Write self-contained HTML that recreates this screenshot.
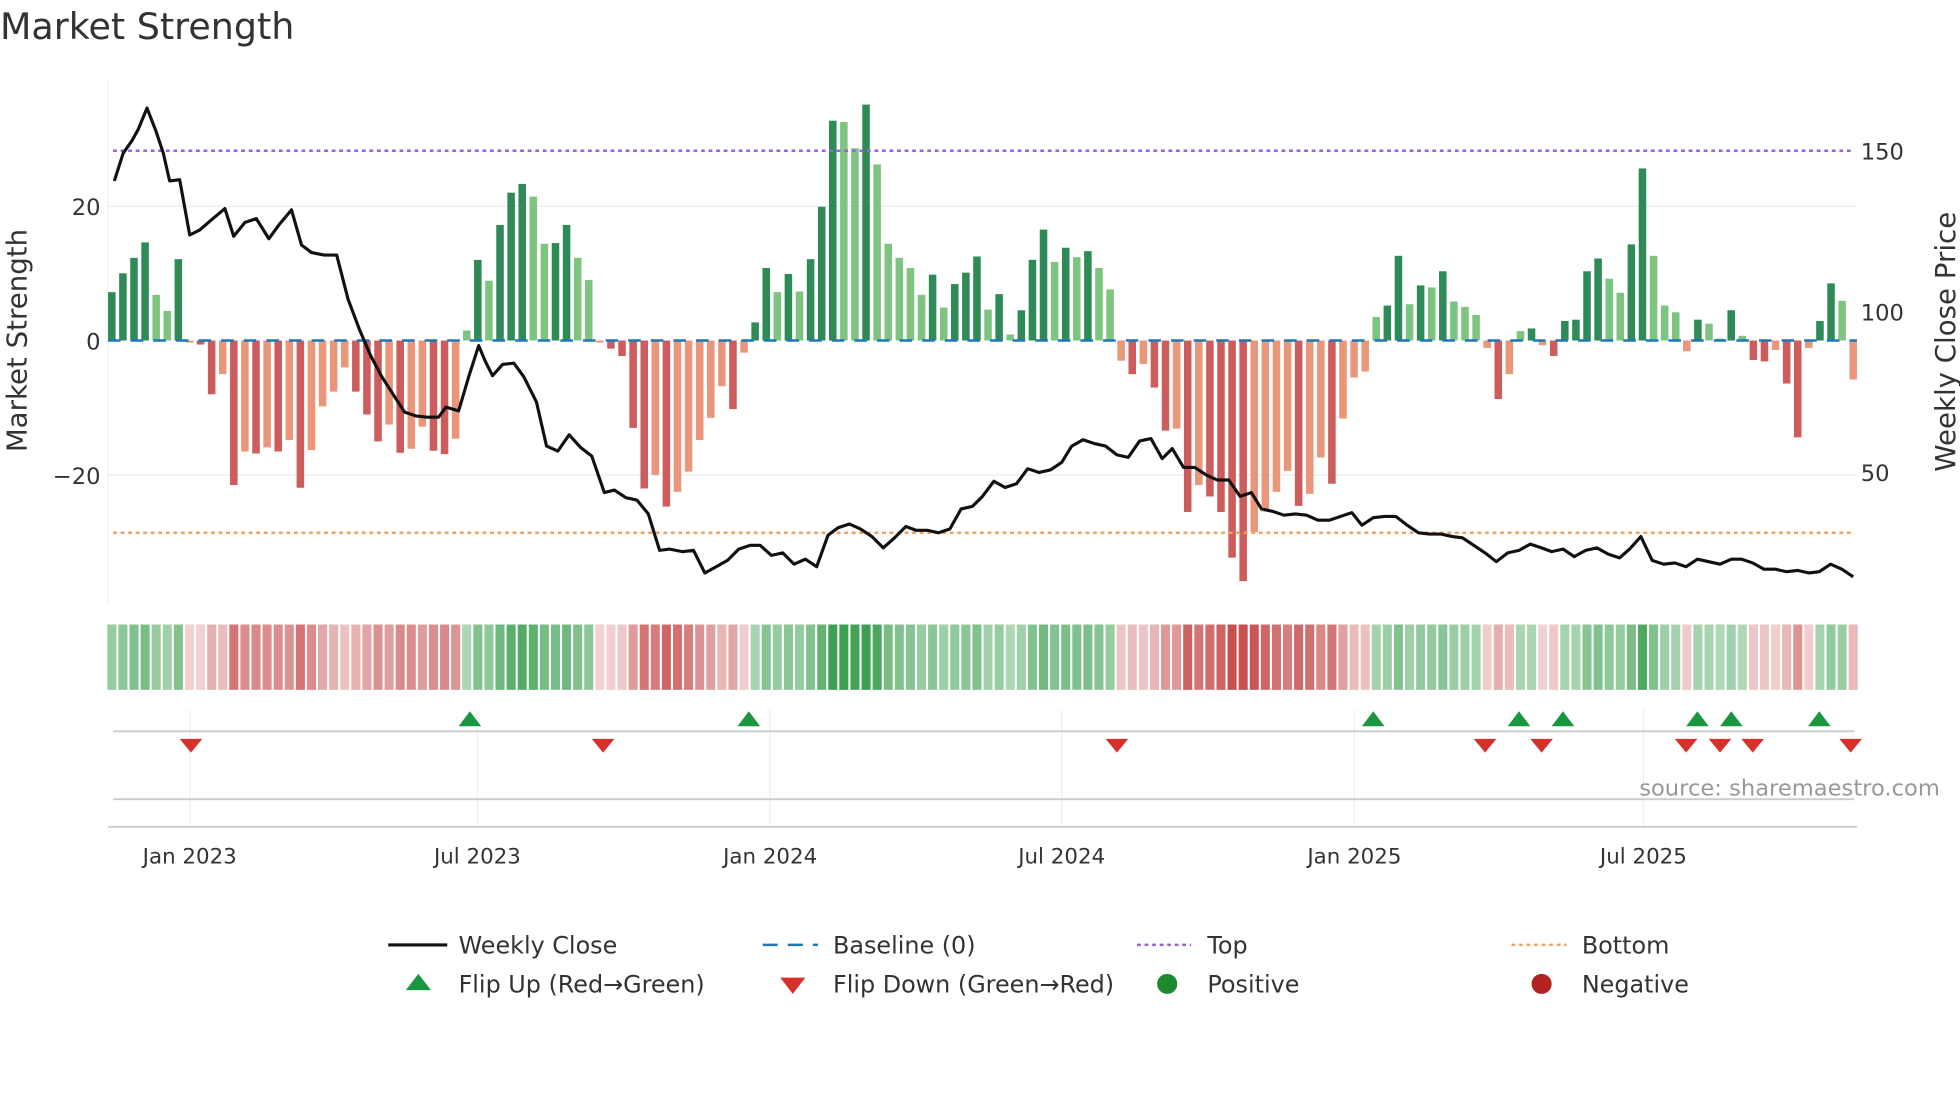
<!DOCTYPE html>
<html><head><meta charset="utf-8"><style>
html,body{margin:0;padding:0;background:#fff;}
svg{display:block;font-family:"DejaVu Sans","Liberation Sans",sans-serif;}
</style></head><body>
<svg id="s" width="1960" height="1102" viewBox="0 0 1560 877" preserveAspectRatio="none" xmlns="http://www.w3.org/2000/svg">
<rect width="1560" height="877" fill="#fff"/>
<text x="0" y="31" font-size="29" fill="#333">Market Strength</text>
<line x1="86" y1="65" x2="86" y2="480" stroke="#eee"/>
<line x1="86" y1="164" x2="1478" y2="164" stroke="#ececec"/>
<line x1="86" y1="378" x2="1478" y2="378" stroke="#ececec"/>
<g font-size="18" fill="#333">
<text x="80" y="171" text-anchor="end">20</text>
<text x="80" y="278" text-anchor="end">0</text>
<text x="80" y="385" text-anchor="end">−20</text>
<text x="1481" y="127">150</text>
<text x="1481" y="255">100</text>
<text x="1481" y="383">50</text>
</g>
<text transform="translate(21,271) rotate(-90)" font-size="22" fill="#333" text-anchor="middle">Market Strength</text>
<text transform="translate(1556,272) rotate(-90)" font-size="22" fill="#333" text-anchor="middle">Weekly Close Price</text>
<g id="bars"></g>
<line x1="86" y1="271" x2="1478" y2="271" stroke="#1f77b4" stroke-width="2" stroke-dasharray="10,8"/>
<line x1="90" y1="120" x2="1476" y2="120" stroke="#9b5fe0" stroke-width="2" stroke-dasharray="3,3"/>
<line x1="90" y1="424" x2="1476" y2="424" stroke="#f0a060" stroke-width="2" stroke-dasharray="3,3"/>
<polyline id="price" fill="none" stroke="#111" stroke-width="2.5" stroke-linejoin="round"/>
<g id="strip"></g>
<g stroke="#eee" stroke-width="1">
<line x1="151" y1="565" x2="151" y2="658"/><line x1="380" y1="565" x2="380" y2="658"/>
<line x1="613" y1="565" x2="613" y2="658"/><line x1="845" y1="565" x2="845" y2="658"/>
<line x1="1078" y1="565" x2="1078" y2="658"/><line x1="1308" y1="565" x2="1308" y2="658"/>
</g>
<line x1="90" y1="582" x2="1476" y2="582" stroke="#ccc" stroke-width="1.5"/>
<line x1="90" y1="636" x2="1476" y2="636" stroke="#ccc" stroke-width="1.5"/>
<line x1="86" y1="658" x2="1478" y2="658" stroke="#ccc" stroke-width="1.5"/>
<g id="tri"></g>
<text x="1544" y="633" font-size="18" fill="#999" text-anchor="end">source: sharemaestro.com</text>
<g font-size="17" fill="#333" text-anchor="middle">
<text x="151" y="687">Jan 2023</text><text x="380" y="687">Jul 2023</text>
<text x="613" y="687">Jan 2024</text><text x="845" y="687">Jul 2024</text>
<text x="1078" y="687">Jan 2025</text><text x="1308" y="687">Jul 2025</text>
</g>
<g font-size="19" fill="#333">
<line x1="309" y1="752" x2="356" y2="752" stroke="#111" stroke-width="2.5"/>
<text x="365" y="759">Weekly Close</text>
<line x1="607" y1="752" x2="651" y2="752" stroke="#1f77b4" stroke-width="2" stroke-dasharray="12,8"/>
<text x="663" y="759">Baseline (0)</text>
<line x1="905" y1="752" x2="948" y2="752" stroke="#9b5fe0" stroke-width="2" stroke-dasharray="3,3"/>
<text x="961" y="759">Top</text>
<line x1="1203" y1="752" x2="1247" y2="752" stroke="#f0a060" stroke-width="2" stroke-dasharray="3,3"/>
<text x="1259" y="759">Bottom</text>
<polygon points="323,788 343,788 333,775" fill="#1a9641"/>
<text x="365" y="790">Flip Up (Red→Green)</text>
<polygon points="621,778 641,778 631,791" fill="#d7302a"/>
<text x="663" y="790">Flip Down (Green→Red)</text>
<circle cx="929" cy="783" r="8" fill="#1e8a2e"/>
<text x="961" y="790">Positive</text>
<circle cx="1227" cy="783" r="8" fill="#b22222"/>
<text x="1259" y="790">Negative</text>
</g>
</svg>
<script>
var v=[7.2,10,12.3,14.6,6.8,4.4,12.1,-0.3,-0.6,-8,-5,-21.5,-16.5,-16.8,-15.9,-16.5,-14.8,-21.9,-16.3,-9.8,-7.6,-4,-7.6,-11,-15,-12.5,-16.7,-16.1,-12.8,-16.4,-16.9,-14.6,1.5,12,8.9,17.2,22,23.3,21.4,14.4,14.5,17.2,12.3,9,-0.3,-1.2,-2.3,-13,-22,-20,-24.7,-22.5,-19.5,-14.8,-11.5,-6.8,-10.2,-1.8,2.7,10.8,7.2,9.9,7.3,12.1,19.9,32.7,32.5,28.6,35.1,26.2,14.4,12.3,10.8,6.8,9.8,4.9,8.4,10.1,12.5,4.6,6.9,0.9,4.5,12,16.5,11.7,13.8,12.4,13.3,10.8,7.6,-3,-5,-3.5,-7,-13.4,-13.1,-25.5,-21.5,-23.2,-25.5,-32.3,-35.8,-28.5,-25.4,-22.5,-19.4,-24.6,-22.8,-17.4,-21.3,-11.6,-5.5,-4.6,3.5,5.2,12.6,5.4,8.2,7.9,10.3,5.8,5,3.8,-1.1,-8.7,-5,1.4,1.8,-0.7,-2.3,2.9,3.1,10.3,12.2,9.2,7.1,14.3,25.6,12.6,5.2,4.2,-1.6,3.1,2.5,0.3,4.5,0.7,-2.9,-3.1,-1.4,-6.4,-14.4,-1.1,2.9,8.5,5.9,-5.8];
var NS="http://www.w3.org/2000/svg";
function el(p,t,a){var e=document.createElementNS(NS,t);for(var k in a)e.setAttribute(k,a[k]);p.appendChild(e);return e;}
var bars=document.getElementById('bars'),strip=document.getElementById('strip');
var step=(1475-89)/(v.length-1);
for(var i=0;i<v.length;i++){
 var x=89+i*step,val=v[i],prev=i?v[i-1]:0,dark=Math.abs(val)>Math.abs(prev);
 var c=val>=0?(dark?'#2e8b57':'#7cc47f'):(dark?'#cd5c5c':'#e9967a');
 var h=Math.abs(val)*5.35;
 el(bars,'rect',{x:x-3,y:val>=0?271-h:271,width:6,height:Math.max(h,0.8),fill:c});
 var m=Math.min(Math.abs(val)/30,1);
 var sc;
 if(val>=0){var a=0.4+0.6*m;sc='rgba(60,160,80,'+a.toFixed(2)+')';}
 else{var a=0.25+0.75*m;sc='rgba(200,80,80,'+a.toFixed(2)+')';}
 el(strip,'rect',{x:x-3.6,y:497,width:7.2,height:52,fill:sc});
}
var p=[[91,144],[98,122],[105,112],[110,103],[117,86],[124,104],[130,122],[135,144],[143,143],[151,187],[159,183],[167,176],[179,166],[186,188],[195,177],[204,174],[214,190],[222,179],[232,167],[240,195],[248,201],[258,203],[268,203],[277,238],[286,262],[295,283],[304,300],[313,314],[322,328],[331,331],[340,332],[349,332],[355,324],[365,327],[373,300],[381,275],[386,287],[392,299],[400,290],[409,289],[417,300],[427,320],[435,355],[444,359],[453,346],[462,356],[471,363],[481,392],[489,390],[498,396],[507,398],[516,409],[525,438],[533,437],[543,439],[552,438],[561,456],[570,451],[579,446],[588,437],[597,434],[605,434],[614,442],[623,440],[632,449],[641,445],[650,451],[659,426],[667,420],[676,417],[685,421],[694,427],[703,436],[712,428],[721,419],[729,422],[738,422],[747,424],[756,421],[765,405],[774,403],[782,395],[791,383],[800,388],[809,385],[818,373],[827,376],[836,374],[845,368],[853,355],[862,350],[871,353],[880,355],[889,362],[898,364],[907,351],[916,349],[925,365],[933,357],[942,372],[951,372],[960,378],[969,382],[978,382],[987,395],[996,392],[1004,405],[1013,407],[1022,410],[1031,409],[1040,410],[1049,414],[1058,414],[1067,411],[1076,408],[1084,418],[1093,412],[1102,411],[1111,411],[1120,418],[1129,424],[1138,425],[1147,425],[1156,427],[1164,428],[1173,434],[1182,440],[1191,447],[1200,440],[1209,438],[1218,433],[1227,436],[1235,439],[1244,437],[1253,443],[1262,438],[1271,436],[1280,441],[1289,444],[1297,437],[1306,427],[1315,446],[1324,449],[1333,448],[1342,451],[1351,445],[1360,447],[1369,449],[1378,445],[1386,445],[1395,448],[1404,453],[1413,453],[1422,455],[1431,454],[1440,456],[1448,455],[1457,449],[1466,453],[1475,459]];
document.getElementById('price').setAttribute('points',p.map(function(q){return q.join(',')}).join(' '));
var tri=document.getElementById('tri');
[374,596,1093,1209,1244,1351,1378,1448].forEach(function(x){el(tri,'polygon',{points:(x-9)+',578 '+(x+9)+',578 '+x+',566',fill:'#1a9641'});});
[152,480,889,1182,1227,1342,1369,1395,1473].forEach(function(x){el(tri,'polygon',{points:(x-9)+',588 '+(x+9)+',588 '+x+',599',fill:'#d7302a'});});
</script>
</body></html>
